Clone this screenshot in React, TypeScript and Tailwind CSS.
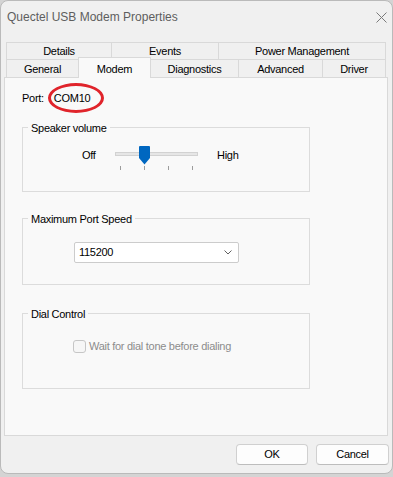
import React from 'react';

const rowOne = [
  { label: 'Details', w: 'w-[105px]' },
  { label: 'Events', w: 'w-[107px]' },
  { label: 'Power Management', w: 'w-[168px] border-r' },
];

function CloseIcon() {
  return (
    <svg width="11" height="11" viewBox="0 0 11 11">
      <path d="M0.5 0.5 L10.5 10.5 M10.5 0.5 L0.5 10.5" stroke="#7a7a7a" strokeWidth="1" fill="none" />
    </svg>
  );
}

function Slider() {
  const ticks = [5.5, 29.5, 53.5, 77.5];
  return (
    <svg width="84" height="24" viewBox="0 0 84 24">
      <rect x="0.5" y="6.5" width="82" height="3" fill="#e6e6e6" stroke="#d2d2d2" />
      {ticks.map((x) => (
        <line key={x} x1={x} y1="20" x2={x} y2="24" stroke="#9c9c9c" strokeWidth="1" />
      ))}
      <path d="M25 0 H34 Q35 0 35 1 V12 L29.5 18.5 L24 12 V1 Q24 0 25 0 Z" fill="#0067c0" />
    </svg>
  );
}

function GroupBox({ title, h, className = '', children }: { title: string; h: string; className?: string; children?: React.ReactNode }) {
  return (
    <div className={`w-[288px] ${h} border border-[#dcdcdc] ${className}`}>
      <div className="-mt-[6px] ml-[5px] px-[3px] w-fit bg-[#f9f9f9] leading-[13px]">{title}</div>
      {children}
    </div>
  );
}

export default function App() {
  return (
    <div className="w-[393px] h-[477px] bg-[#d4d4d4] font-['Liberation_Sans',Arial,sans-serif] text-[11px] tracking-[-0.28px] text-black">
      <div className="w-[393px] h-[474px] rounded-[8px] border border-[#bababa] bg-[#f0f0f0] flex flex-col overflow-hidden">
        {/* title bar */}
        <div className="h-[32px] flex items-center justify-between pl-[6px] pr-[5px]">
          <span className="text-[12px] tracking-normal text-[#5e5e5e]">Quectel USB Modem Properties</span>
          <CloseIcon />
        </div>

        {/* tabs */}
        <div className="mt-[9px] pl-[5px]">
          <div className="flex h-[17px]">
            {rowOne.map((t) => (
              <div key={t.label} className={`${t.w} h-full border-t border-l border-[#d9d9d9] flex items-center justify-center`}>
                {t.label}
              </div>
            ))}
          </div>
          <div className="flex h-[18px] items-end">
            <div className="w-[72px] h-full border-t border-l border-[#d9d9d9] flex items-center justify-center pt-[1px]">General</div>
            <div className="relative z-10 w-[73px] h-[21px] -mb-[1px] border-t border-l border-r border-[#d9d9d9] bg-[#f9f9f9] flex justify-center pt-[3px]">
              Modem
            </div>
            <div className="w-[87px] h-full border-t border-[#d9d9d9] flex items-center justify-center pt-[1px]">Diagnostics</div>
            <div className="w-[84px] h-full border-t border-l border-[#d9d9d9] flex items-center justify-center pt-[1px]">Advanced</div>
            <div className="w-[64px] h-full border-t border-l border-r border-[#d9d9d9] flex items-center justify-center pt-[1px]">Driver</div>
          </div>
        </div>

        {/* tab page */}
        <div className="ml-[3px] w-[384px] h-[359px] border border-[#d9d9d9] bg-[#f9f9f9] flex flex-col pl-[17px]">
          <div className="mt-[5px] h-[30px] flex items-center">
            <span>Port:</span>
            <div className="ml-[4px] w-[56px] h-[30px] rounded-[50%] border-[3px] border-[#e0242b] flex items-center pl-[3px]">
              COM10
            </div>
          </div>

          <GroupBox title="Speaker volume" h="h-[65px]" className="mt-[14px]">
            <div className="mt-[11px] flex pl-[59px]">
              <span className="w-[33px] mt-[3px] leading-[13px]">Off</span>
              <Slider />
              <span className="ml-[18px] mt-[3px] leading-[13px]">High</span>
            </div>
          </GroupBox>

          <GroupBox title="Maximum Port Speed" h="h-[67px]" className="mt-[26px]">
            <div className="mt-[16px] ml-[51px] w-[165px] h-[21px] bg-white border border-[#cccccc] rounded-[2px] flex items-center justify-between pl-[4px] pr-[6px]">
              <span>115200</span>
              <svg width="8" height="5" viewBox="0 0 8 5">
                <path d="M0.5 0.5 L4 4 L7.5 0.5" stroke="#606060" strokeWidth="1" fill="none" />
              </svg>
            </div>
          </GroupBox>

          <GroupBox title="Dial Control" h="h-[76px]" className="mt-[28px]">
            <div className="mt-[19px] ml-[50px] flex items-center">
              <div className="w-[13px] h-[13px] border border-[#c6c6c6] rounded-[3px] bg-[#f6f6f6]" />
              <span className="ml-[3px] text-[#8c8c8c] leading-[13px]">Wait for dial tone before dialing</span>
            </div>
          </GroupBox>
        </div>

        {/* buttons */}
        <div className="mt-[8px] flex justify-end gap-[8px] pr-[3px]">
          <button className="w-[72px] h-[21px] bg-[#fdfdfd] border border-[#d0d0d0] border-b-[#bdbdbd] rounded-[4px] flex items-center justify-center">
            OK
          </button>
          <button className="w-[73px] h-[21px] bg-[#fdfdfd] border border-[#d0d0d0] border-b-[#bdbdbd] rounded-[4px] flex items-center justify-center">
            Cancel
          </button>
        </div>
      </div>
    </div>
  );
}
